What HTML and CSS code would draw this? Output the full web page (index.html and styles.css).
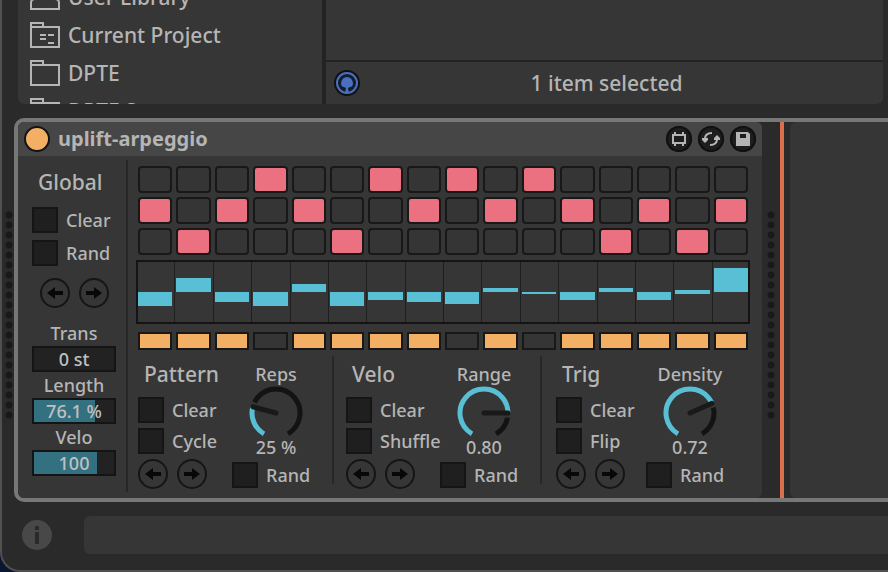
FILE: index.html
```html
<!DOCTYPE html>
<html lang="en">
<head>
<meta charset="utf-8">
<title>uplift-arpeggio</title>
<link rel="stylesheet" href="styles.css">
</head>
<body>
<div class="window">
  <div class="upper">
    <nav class="places" aria-label="Places">
      <ul class="place-list">
        <li><a class="place" href="#"><svg class="place-icon" viewBox="0 0 30 26"><path d="M1 25V19Q1 15 5 15H25Q29 15 29 19V25Z"/></svg>User Library</a></li>
        <li><a class="place" href="#"><svg class="place-icon" viewBox="0 0 30 26"><path d="M1 1H13V5M1 0V25H29V5H1M10 13H16M18 13H24M10 17H16M18 21H24"/></svg>Current Project</a></li>
        <li><a class="place" href="#"><svg class="place-icon" viewBox="0 0 30 26"><path d="M1 1H13V5M1 0V25H29V5H1"/></svg>DPTE</a></li>
        <li><a class="place" href="#"><svg class="place-icon" viewBox="0 0 30 26"><path d="M1 1H13V5M1 0V25H29V5H1"/></svg>DPTE S</a></li>
      </ul>
    </nav>
    <section class="results">
      <div class="results-body"></div>
      <div class="status">
        <button class="preview" aria-label="Preview"><svg viewBox="0 0 26 26"><circle cx="13" cy="13" r="12" fill="#141c2e" stroke="#111" stroke-width="2"/><circle cx="13" cy="13" r="10" fill="none" stroke="#4a70bd" stroke-width="2"/><path d="M11 23L12 18L10 17Q7 17 7 13Q8 7 13 7Q18 7 19 13Q19 17 16 17L14 18L15 23Z" fill="#4a70bd"/></svg></button>
        <span class="status-text">1 item selected</span>
      </div>
    </section>
  </div>

  <div class="rack">
    <div class="handle"></div>
    <div class="chain">
      <section class="device">
        <header class="device-header">
          <button class="power" aria-label="Device on"></button>
          <h1 class="device-name">uplift-arpeggio</h1>
          <button class="tool" aria-label="Edit"><svg viewBox="0 0 26 26"><path d="M7 9H19V17H7ZM9 6V9M17 6V9M9 17V20M17 17V20"/></svg></button>
          <button class="tool" aria-label="Hot-swap"><svg viewBox="0 0 26 26"><path d="M14 7Q7 7 7 13M12 19Q19 19 19 13"/><path class="solid" d="M4 12H10V14L7 17L4 14ZM16 14H22V12L19 9L16 12Z"/></svg></button>
          <button class="tool" aria-label="Save"><svg viewBox="0 0 26 26"><path class="solid" fill-rule="evenodd" d="M6 6H18L20 8V20H6ZM10 8V12H16V8Z"/></svg></button>
        </header>
        <div class="device-body">
          <aside class="global">
            <h2 class="title">Global</h2>
            <label class="check"><input type="checkbox">Clear</label>
            <label class="check"><input type="checkbox">Rand</label>
            <div class="arrows">
              <button class="arrow" aria-label="Shift left"><svg viewBox="0 0 30 30"><path d="M7 15L15 9V13H23V17H15V21Z"/></svg></button>
              <button class="arrow" aria-label="Shift right"><svg viewBox="0 0 30 30"><path d="M23 15L15 9V13H7V17H15V21Z"/></svg></button>
            </div>
            <label class="field">Trans<input type="text" value="0 st"></label>
            <label class="field">Length<input type="text" value="76.1 %" style="--fill:76.1%"></label>
            <label class="field">Velo<input type="text" value="100" style="--fill:78.7%"></label>
          </aside>
          <div class="sequencer">
            <div class="pads" id="pads"></div>
            <div class="lanes" id="lanes"></div>
            <div class="gates" id="gates"></div>
            <div class="modules">
              <section class="module">
                <div class="module-side">
                  <h2 class="title">Pattern</h2>
                  <label class="check"><input type="checkbox">Clear</label>
                  <label class="check"><input type="checkbox">Cycle</label>
                  <div class="arrows">
                    <button class="arrow" aria-label="Pattern left"><svg viewBox="0 0 30 30"><path d="M7 15L15 9V13H23V17H15V21Z"/></svg></button>
                    <button class="arrow" aria-label="Pattern right"><svg viewBox="0 0 30 30"><path d="M23 15L15 9V13H7V17H15V21Z"/></svg></button>
                  </div>
                </div>
                <div class="module-dial">
                  <label class="dial" data-value="0.25">Reps<input type="range" min="0" max="1" step="0.01" value="0.25"><output>25 %</output></label>
                  <label class="check"><input type="checkbox">Rand</label>
                </div>
              </section>
              <section class="module">
                <div class="module-side">
                  <h2 class="title">Velo</h2>
                  <label class="check"><input type="checkbox">Clear</label>
                  <label class="check"><input type="checkbox">Shuffle</label>
                  <div class="arrows">
                    <button class="arrow" aria-label="Velocity left"><svg viewBox="0 0 30 30"><path d="M7 15L15 9V13H23V17H15V21Z"/></svg></button>
                    <button class="arrow" aria-label="Velocity right"><svg viewBox="0 0 30 30"><path d="M23 15L15 9V13H7V17H15V21Z"/></svg></button>
                  </div>
                </div>
                <div class="module-dial">
                  <label class="dial" data-value="0.8">Range<input type="range" min="0" max="1" step="0.01" value="0.8"><output>0.80</output></label>
                  <label class="check"><input type="checkbox">Rand</label>
                </div>
              </section>
              <section class="module module-trig">
                <div class="module-side">
                  <h2 class="title">Trig</h2>
                  <label class="check"><input type="checkbox">Clear</label>
                  <label class="check"><input type="checkbox">Flip</label>
                  <div class="arrows">
                    <button class="arrow" aria-label="Trigger left"><svg viewBox="0 0 30 30"><path d="M7 15L15 9V13H23V17H15V21Z"/></svg></button>
                    <button class="arrow" aria-label="Trigger right"><svg viewBox="0 0 30 30"><path d="M23 15L15 9V13H7V17H15V21Z"/></svg></button>
                  </div>
                </div>
                <div class="module-dial">
                  <label class="dial" data-value="0.72">Density<input type="range" min="0" max="1" step="0.01" value="0.72"><output>0.72</output></label>
                  <label class="check"><input type="checkbox">Rand</label>
                </div>
              </section>
            </div>
          </div>
        </div>
      </section>
      <div class="handle handle-end"></div>
      <div class="insert-line"></div>
      <div class="drop-zone"></div>
    </div>
  </div>

  <footer class="footer">
    <button class="info" aria-label="Info"><svg viewBox="0 0 30 30"><circle cx="15" cy="15" r="15" fill="#484848"/><path d="M13 6H17V10H13ZM13 12H17V24H13Z" fill="#2a2a2a"/></svg></button>
    <div class="info-bar"></div>
  </footer>
</div>
<script src="script.js"></script>
</body>
</html>
```

FILE: styles.css
```css
* {
  box-sizing: border-box;
}

body {
  margin: 0;
  background: #0b1730;
  color: #b5b5b5;
  font-family: "Noto Sans", "Liberation Sans", sans-serif;
  font-size: 21px;
  font-weight: 500;
  line-height: 26px;
}

button {
  padding: 0;
  border: 0;
  background: none;
}

svg {
  display: block;
  width: 100%;
  height: 100%;
}

h1,
h2 {
  margin: 0;
}

.window {
  display: flex;
  flex-direction: column;
  height: 100vh;
  overflow: hidden;
  border-left: 2px solid #505050;
  border-bottom: 2px solid #505050;
  border-bottom-left-radius: 20px;
  background: #2a2a2a;
}

/* Browser and results */
.upper {
  display: flex;
  flex: 1;
  gap: 4px;
  min-height: 0;
  margin: 0 5px 0 16px;
  overflow: hidden;
  border-radius: 0 0 6px 6px;
  background: #232323;
}

.places {
  width: 304px;
  overflow: hidden;
  background: #363636;
}

.place-list {
  margin: -22px 0 0;
  padding: 0;
  list-style: none;
}

.place {
  display: flex;
  align-items: center;
  gap: 8px;
  height: 38px;
  padding-left: 12px;
  color: inherit;
  text-decoration: none;
}

.place-icon {
  width: 30px;
  height: 26px;
  fill: none;
  stroke: #b5b5b5;
  stroke-width: 2;
}

.results {
  display: flex;
  flex: 1;
  flex-direction: column;
  background: #363636;
}

.results-body {
  flex: 1;
}

.status {
  display: flex;
  align-items: center;
  height: 44px;
  padding: 0 8px;
  border-top: 2px solid #232323;
}

.preview {
  width: 26px;
  height: 26px;
}

.status-text {
  flex: 1;
  padding-right: 22px;
  text-align: center;
}

/* Device chain */
.rack {
  display: flex;
  margin-top: 14px;
}

.handle {
  flex: none;
  width: 12px;
  height: 210px;
  margin-top: 92px;
  background: radial-gradient(circle, #191919 3px, transparent 4px) 1px 0 / 12px 10px;
}

.chain {
  display: flex;
  flex: 1;
  border: 4px solid #777;
  border-right: 0;
  border-radius: 10px 0 0 10px;
}

.handle-end {
  width: 18px;
  margin-top: 88px;
  background-size: 18px 10px;
  background-position: 0 0;
}

.insert-line {
  width: 4px;
  background: #d9704c;
}

.drop-zone {
  flex: 1;
  margin-left: 6px;
  border-radius: 6px 0 0 6px;
  background: #363636;
}

.device {
  width: 744px;
  overflow: hidden;
  border-radius: 6px;
  background: #363636;
}

.device-header {
  display: flex;
  align-items: center;
  gap: 6px;
  height: 34px;
  padding: 0 6px;
  background: #464646;
}

.power {
  width: 26px;
  height: 26px;
  border: 2px solid #141414;
  border-radius: 50%;
  background: #f3b064;
}

.device-name {
  flex: 1;
  padding-left: 2px;
  font-size: 20px;
  font-weight: 700;
}

.tool {
  width: 26px;
  height: 26px;
  border-radius: 50%;
  background: #1e1e1e;
  box-shadow: inset 0 0 0 2px #101010;
}

.tool path {
  fill: none;
  stroke: #b5b5b5;
  stroke-width: 2;
}

.tool .solid {
  fill: #b5b5b5;
  stroke: none;
}

.device-body {
  display: flex;
  height: 342px;
  font-size: 18px;
}

/* Global column */
.global {
  display: flex;
  flex: none;
  flex-direction: column;
  width: 110px;
  margin: 4px 0 6px;
  padding: 10px 10px 0 14px;
  border-right: 2px solid #272727;
}

.title {
  padding-left: 6px;
  font-size: 21px;
  font-weight: 500;
  line-height: 24px;
}

.check {
  display: flex;
  align-items: center;
  gap: 8px;
}

.check input {
  appearance: none;
  flex: none;
  width: 26px;
  height: 26px;
  margin: 0;
  border: 2px solid #151515;
  background: #1f1f1f;
}

.global .check {
  margin-top: 7px;
}

.global .title + .check {
  margin-top: 13px;
}

.arrows {
  display: flex;
  gap: 9px;
}

.global .arrows {
  margin: 12px 0 12px 8px;
}

.arrow {
  width: 30px;
  height: 30px;
  border-radius: 50%;
  box-shadow: inset 0 0 0 2px #151515;
}

.arrow path {
  fill: #080808;
}

.field {
  display: block;
  text-align: center;
}

.field input {
  display: block;
  width: 84px;
  height: 26px;
  padding: 0;
  border: 2px solid #141414;
  border-radius: 0;
  background: linear-gradient(90deg, #337080 var(--fill, 0%), #222 var(--fill, 0%));
  color: #c0c0c0;
  font: inherit;
  text-align: center;
}

/* Step sequencer */
.sequencer {
  flex: 1;
  min-width: 0;
  padding: 10px 12px 0 8px;
}

.pads,
.gates {
  display: grid;
  grid-template-columns: repeat(16, 1fr);
  gap: 4px;
  padding: 0 2px;
}

.pads input,
.gates input {
  appearance: none;
  width: 100%;
  height: 27px;
  margin: 0;
  border: 2px solid #181818;
  border-radius: 4px;
  background: #353535;
}

.pads input:checked {
  background: #ec7180;
}

.gates input {
  height: 18px;
  border-radius: 0;
}

.gates input:checked {
  background: #f3b064;
}

.lanes {
  display: grid;
  grid-template-columns: repeat(16, 1fr);
  gap: 4px;
  height: 64px;
  margin: 5px 0 8px;
  border: 2px solid #141414;
}

.lane {
  position: relative;
}

.lane + .lane::before {
  content: "";
  position: absolute;
  inset: 0 auto 0 -2px;
  width: 1px;
  background: #1f1f1f;
}

.bar {
  position: absolute;
  right: 0;
  left: 0;
  background: #59bfd4;
}

/* Modules under the sequencer */
.modules {
  display: flex;
  padding-left: 2px;
}

.module {
  display: flex;
  flex: none;
  width: 208px;
  height: 128px;
  margin-top: 6px;
  padding-top: 6px;
}

.module + .module {
  position: relative;
}

.module + .module::before {
  content: "";
  position: absolute;
  top: 0;
  left: -14px;
  width: 2px;
  height: 128px;
  background: #272727;
}

.module-side {
  display: flex;
  flex-direction: column;
  gap: 5px;
  width: 94px;
}

.module-side .title {
  margin-bottom: 6px;
}

.module-trig {
  padding-left: 2px;
}

.module-trig .module-side {
  width: 90px;
}

.module-dial {
  width: 88px;
}

.dial {
  position: relative;
  display: flex;
  flex-direction: column;
  align-items: center;
  height: 100px;
  line-height: 24px;
}

.dial svg {
  flex: none;
  width: 54px;
  height: 54px;
  fill: none;
  stroke-width: 5;
}

.dial input {
  position: absolute;
  top: 24px;
  width: 54px;
  height: 54px;
  margin: 0;
  opacity: 0;
}

.dial output {
  margin-top: -5px;
}

.track {
  stroke: #131313;
}

.level {
  stroke: #59bfd4;
}

.needle {
  stroke: #191919;
  stroke-linecap: round;
}

/* Footer */
.footer {
  display: flex;
  align-items: center;
  gap: 32px;
  margin: 14px 0 16px;
  padding-left: 20px;
}

.info {
  width: 30px;
  height: 30px;
}

.info-bar {
  flex: 1;
  height: 38px;
  border-radius: 6px 0 0 6px;
  background: #363636;
}
```

FILE: script.js
```js
const rows = ["...1..1.1.1.....", "1.1.1..1.1.1.1.1", ".1...1......1.1."];
const gates = "111.1111.1.11111";
// Each lane bar: offset from the lane top and height, in pixels.
const bars = [[30, 14], [16, 14], [30, 10], [30, 14], [22, 8], [30, 14], [30, 8], [30, 10],
  [30, 12], [26, 4], [30, 2], [30, 8], [26, 4], [30, 8], [28, 4], [6, 24]];

function addSteps(parent, pattern, name) {
  [...pattern].forEach((mark, i) => {
    const box = document.createElement("input");
    box.type = "checkbox";
    box.checked = mark === "1";
    box.setAttribute("aria-label", `${name} step ${i + 1}`);
    parent.append(box);
  });
}

rows.forEach((row, i) => addSteps(document.getElementById("pads"), row, `Row ${i + 1}`));
addSteps(document.getElementById("gates"), gates, "Gate");

bars.forEach(([top, height]) => {
  const lane = document.createElement("div");
  lane.className = "lane";
  lane.innerHTML = `<div class="bar" style="top:${top}px;height:${height}px"></div>`;
  document.getElementById("lanes").append(lane);
});

document.querySelectorAll(".dial").forEach((dial) => {
  const sweep = dial.dataset.value * 300;
  const arc = 'd="M-12 20.8A24 24 0 1 1 12 20.8" pathLength="300"';
  dial.querySelector("input").insertAdjacentHTML("beforebegin",
    `<svg viewBox="-27 -27 54 54">
      <path class="track" ${arc} stroke-dasharray="0 ${sweep + 11} 400 0"/>
      <path class="level" ${arc} stroke-dasharray="${sweep} 400"/>
      <path class="needle" d="M0 0V24" transform="rotate(${sweep + 30})"/>
    </svg>`);
});
```
